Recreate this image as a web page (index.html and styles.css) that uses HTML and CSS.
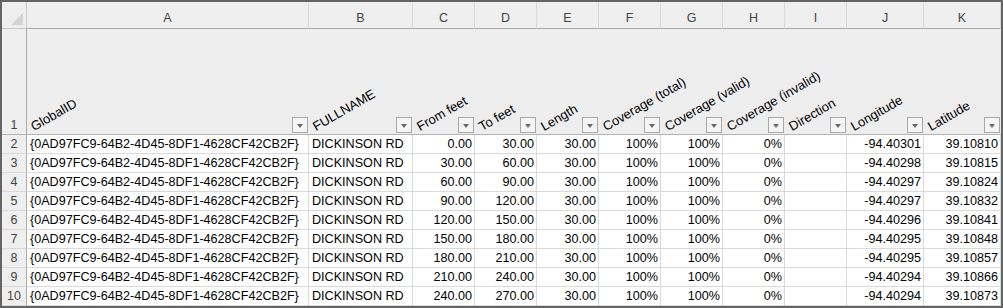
FILE: index.html
```html
<!DOCTYPE html>
<html lang="en">
<head>
    <meta charset="UTF-8">
    <meta name="viewport" content="width=device-width, initial-scale=1.0">
    <title>Coverage segments - DICKINSON RD</title>
    <link rel="stylesheet" href="styles.css">
</head>
<body>
    <div class="sheet">
        <div class="grid">
            <!-- Column letters -->
            <div class="corner">
                <svg width="13" height="13" viewBox="0 0 13 13"><polygon points="12,0 12,12 0,12" fill="#d3d3d3"/></svg>
            </div>
            <div class="col-head">A</div>
            <div class="col-head">B</div>
            <div class="col-head">C</div>
            <div class="col-head">D</div>
            <div class="col-head">E</div>
            <div class="col-head">F</div>
            <div class="col-head">G</div>
            <div class="col-head">H</div>
            <div class="col-head">I</div>
            <div class="col-head">J</div>
            <div class="col-head">K</div>

            <!-- Row 1: table headers with filter buttons -->
            <div class="row-head row-head-top">1</div>
            <div class="title"><span class="label">GlobalID</span><span class="filter"></span></div>
            <div class="title"><span class="label">FULLNAME</span><span class="filter"></span></div>
            <div class="title"><span class="label">From feet</span><span class="filter"></span></div>
            <div class="title"><span class="label">To feet</span><span class="filter"></span></div>
            <div class="title"><span class="label">Length</span><span class="filter"></span></div>
            <div class="title"><span class="label">Coverage (total)</span><span class="filter"></span></div>
            <div class="title"><span class="label">Coverage (valid)</span><span class="filter"></span></div>
            <div class="title"><span class="label">Coverage (invalid)</span><span class="filter"></span></div>
            <div class="title"><span class="label">Direction</span><span class="filter"></span></div>
            <div class="title"><span class="label">Longitude</span><span class="filter"></span></div>
            <div class="title"><span class="label">Latitude</span><span class="filter"></span></div>

            <!-- Data rows -->
            <div class="row-head">2</div>
            <div class="cell">{0AD97FC9-64B2-4D45-8DF1-4628CF42CB2F}</div>
            <div class="cell">DICKINSON RD</div>
            <div class="cell num">0.00</div>
            <div class="cell num">30.00</div>
            <div class="cell num">30.00</div>
            <div class="cell num">100%</div>
            <div class="cell num">100%</div>
            <div class="cell num">0%</div>
            <div class="cell"></div>
            <div class="cell num">-94.40301</div>
            <div class="cell num">39.10810</div>

            <div class="row-head">3</div>
            <div class="cell">{0AD97FC9-64B2-4D45-8DF1-4628CF42CB2F}</div>
            <div class="cell">DICKINSON RD</div>
            <div class="cell num">30.00</div>
            <div class="cell num">60.00</div>
            <div class="cell num">30.00</div>
            <div class="cell num">100%</div>
            <div class="cell num">100%</div>
            <div class="cell num">0%</div>
            <div class="cell"></div>
            <div class="cell num">-94.40298</div>
            <div class="cell num">39.10815</div>

            <div class="row-head">4</div>
            <div class="cell">{0AD97FC9-64B2-4D45-8DF1-4628CF42CB2F}</div>
            <div class="cell">DICKINSON RD</div>
            <div class="cell num">60.00</div>
            <div class="cell num">90.00</div>
            <div class="cell num">30.00</div>
            <div class="cell num">100%</div>
            <div class="cell num">100%</div>
            <div class="cell num">0%</div>
            <div class="cell"></div>
            <div class="cell num">-94.40297</div>
            <div class="cell num">39.10824</div>

            <div class="row-head">5</div>
            <div class="cell">{0AD97FC9-64B2-4D45-8DF1-4628CF42CB2F}</div>
            <div class="cell">DICKINSON RD</div>
            <div class="cell num">90.00</div>
            <div class="cell num">120.00</div>
            <div class="cell num">30.00</div>
            <div class="cell num">100%</div>
            <div class="cell num">100%</div>
            <div class="cell num">0%</div>
            <div class="cell"></div>
            <div class="cell num">-94.40297</div>
            <div class="cell num">39.10832</div>

            <div class="row-head">6</div>
            <div class="cell">{0AD97FC9-64B2-4D45-8DF1-4628CF42CB2F}</div>
            <div class="cell">DICKINSON RD</div>
            <div class="cell num">120.00</div>
            <div class="cell num">150.00</div>
            <div class="cell num">30.00</div>
            <div class="cell num">100%</div>
            <div class="cell num">100%</div>
            <div class="cell num">0%</div>
            <div class="cell"></div>
            <div class="cell num">-94.40296</div>
            <div class="cell num">39.10841</div>

            <div class="row-head">7</div>
            <div class="cell">{0AD97FC9-64B2-4D45-8DF1-4628CF42CB2F}</div>
            <div class="cell">DICKINSON RD</div>
            <div class="cell num">150.00</div>
            <div class="cell num">180.00</div>
            <div class="cell num">30.00</div>
            <div class="cell num">100%</div>
            <div class="cell num">100%</div>
            <div class="cell num">0%</div>
            <div class="cell"></div>
            <div class="cell num">-94.40295</div>
            <div class="cell num">39.10848</div>

            <div class="row-head">8</div>
            <div class="cell">{0AD97FC9-64B2-4D45-8DF1-4628CF42CB2F}</div>
            <div class="cell">DICKINSON RD</div>
            <div class="cell num">180.00</div>
            <div class="cell num">210.00</div>
            <div class="cell num">30.00</div>
            <div class="cell num">100%</div>
            <div class="cell num">100%</div>
            <div class="cell num">0%</div>
            <div class="cell"></div>
            <div class="cell num">-94.40295</div>
            <div class="cell num">39.10857</div>

            <div class="row-head">9</div>
            <div class="cell">{0AD97FC9-64B2-4D45-8DF1-4628CF42CB2F}</div>
            <div class="cell">DICKINSON RD</div>
            <div class="cell num">210.00</div>
            <div class="cell num">240.00</div>
            <div class="cell num">30.00</div>
            <div class="cell num">100%</div>
            <div class="cell num">100%</div>
            <div class="cell num">0%</div>
            <div class="cell"></div>
            <div class="cell num">-94.40294</div>
            <div class="cell num">39.10866</div>

            <div class="row-head">10</div>
            <div class="cell">{0AD97FC9-64B2-4D45-8DF1-4628CF42CB2F}</div>
            <div class="cell">DICKINSON RD</div>
            <div class="cell num">240.00</div>
            <div class="cell num">270.00</div>
            <div class="cell num">30.00</div>
            <div class="cell num">100%</div>
            <div class="cell num">100%</div>
            <div class="cell num">0%</div>
            <div class="cell"></div>
            <div class="cell num">-94.40294</div>
            <div class="cell num">39.10873</div>
        </div>
    </div>
</body>
</html>
```

FILE: styles.css
```css
/* Worksheet look: grey headers, light gridlines */
body {
    margin: 0;
    background-color: #ffffff;
    font-family: "Liberation Sans", Arial, sans-serif;
    font-size: 12.6px;
    color: #000000;
}

.sheet {
    width: 1003px;
    height: 308px;
    box-sizing: border-box;
    border: 2px solid #646464;
    overflow: hidden;
    background-color: #ffffff;
}

.grid {
    display: grid;
    grid-template-columns: 25px 282px 104px repeat(7, 62px) 77px 1fr;
    grid-template-rows: 27px 106px repeat(9, 19px);
}

.grid > div {
    box-sizing: border-box;
}

/* Top left select-all box */
.corner {
    background-color: #efefef;
    border-right: 1px solid #c8c8c8;
    border-bottom: 1px solid #c8c8c8;
    display: flex;
    align-items: flex-end;
    justify-content: flex-end;
    padding: 0 2px 2px 0;
}

.corner svg {
    display: block;
}

.col-head {
    background-color: #efefef;
    color: #444444;
    border-right: 1px solid #d9d9d9;
    border-bottom: 1px solid #ababab;
    display: flex;
    align-items: flex-end;
    justify-content: center;
    padding-bottom: 3px;
    font-size: 12.5px;
}

.row-head {
    background-color: #efefef;
    color: #444444;
    border-right: 1px solid #ababab;
    border-bottom: 1px solid #d9d9d9;
    text-align: center;
    line-height: 18px;
    font-size: 12.5px;
}

.row-head-top {
    line-height: normal;
    display: flex;
    align-items: flex-end;
    justify-content: center;
    padding-bottom: 2px;
    border-bottom-color: #b4b4b4;
}

/* Header row of the table, labels slanted upward */
.title {
    background-color: #eeeeee;
    border-bottom: 1px solid #b4b4b4;
    display: flex;
    align-items: flex-end;
}

.title .label {
    flex: 1;
    min-width: 0;
    white-space: nowrap;
    font-size: 13px;
    line-height: 13px;
    margin: 0 0 1px 8px;
    transform-origin: 0 100%;
    transform: rotate(-30deg);
}

.filter {
    flex: none;
    width: 16px;
    height: 16px;
    box-sizing: border-box;
    margin: 0 1px 1px 0;
    border: 1px solid #a9a9a9;
    background-color: #f5f5f5;
    display: flex;
    align-items: center;
    justify-content: center;
}

.filter::after {
    content: "";
    border-top: 4px solid #6a6a6a;
    border-left: 3.5px solid transparent;
    border-right: 3.5px solid transparent;
    margin-top: 1px;
}

.cell {
    border-right: 1px solid #dadada;
    border-bottom: 1px solid #dadada;
    padding: 0 3px;
    line-height: 18px;
    white-space: nowrap;
    overflow: hidden;
}

.num {
    text-align: right;
    padding-right: 2px;
}
```
